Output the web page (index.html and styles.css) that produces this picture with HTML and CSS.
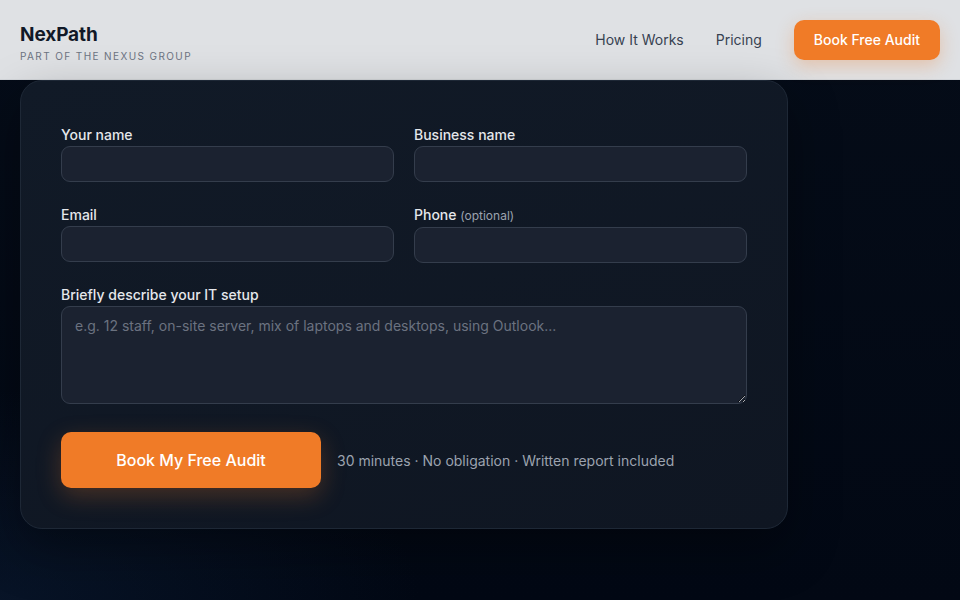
FILE: index.html
```html
<!DOCTYPE html>
<html lang="en">
<head>
<meta charset="utf-8">
<title>NexPath — Book Free Audit</title>
<link rel="stylesheet" href="styles.css">
</head>
<body>
<header class="site-header">
  <div class="brand">
    <div class="brand-name">NexPath</div>
    <div class="brand-sub">Part of the Nexus Group</div>
  </div>
  <nav class="nav">
    <a class="nav-link" href="#">How It Works</a>
    <a class="nav-link" href="#">Pricing</a>
    <a class="nav-cta" href="#">Book Free Audit</a>
  </nav>
</header>
<main class="main">
  <form class="card">
    <div class="grid">
      <div class="field">
        <label class="label">Your name</label>
        <input class="input" type="text">
      </div>
      <div class="field">
        <label class="label">Business name</label>
        <input class="input" type="text">
      </div>
      <div class="field">
        <label class="label">Email</label>
        <input class="input" type="email">
      </div>
      <div class="field">
        <label class="label">Phone <span class="opt">(optional)</span></label>
        <input class="input" type="tel">
      </div>
      <div class="field full">
        <label class="label">Briefly describe your IT setup</label>
        <textarea class="textarea" placeholder="e.g. 12 staff, on-site server, mix of laptops and desktops, using Outlook..."></textarea>
      </div>
    </div>
    <div class="actions">
      <button class="submit" type="button">Book My Free Audit</button>
      <span class="note">30 minutes · No obligation · Written report included</span>
    </div>
  </form>
</main>
</body>
</html>
```
FILE: styles.css
```css
* { box-sizing: border-box; }
html, body { margin: 0; height: 100%; }
body {
  font-family: Inter, "Noto Sans", "Liberation Sans", sans-serif;
  background:
    radial-gradient(ellipse 600px 300px at 0% 100%, rgba(14, 34, 62, 0.45), rgba(14, 34, 62, 0) 70%),
    linear-gradient(180deg, #050c18 0%, #020814 100%);
  color: #e5e7eb;
  overflow: hidden;
}
.site-header {
  height: 80px;
  background: #dfe1e4;
  display: flex;
  align-items: center;
  justify-content: space-between;
  padding: 0 20px;
  border-bottom: 1px solid #d2d5d9;
}
.brand { display: flex; flex-direction: column; }
.brand-name {
  font-size: 19px;
  font-weight: 700;
  color: #111827;
  letter-spacing: -0.1px;
  line-height: 24px;
  margin-top: 7px;
}
.brand-sub {
  font-size: 10px;
  letter-spacing: 1.4px;
  text-transform: uppercase;
  color: #6b7280;
  line-height: 14px;
  margin-top: 2px;
}
.nav { display: flex; align-items: center; gap: 32px; }
.nav-link {
  color: #374151;
  text-decoration: none;
  font-size: 14px;
  line-height: 20px;
}
.nav-cta {
  background: #f07b27;
  color: #fff;
  text-decoration: none;
  font-size: 14px;
  font-weight: 500;
  line-height: 20px;
  padding: 10px 20px;
  border-radius: 10px;
  box-shadow: 0 6px 18px rgba(240, 123, 39, 0.3);
}
.main { padding: 0 20px; }
.card {
  width: 768px;
  background: linear-gradient(160deg, #111a27 0%, #0f1622 100%);
  border: 1px solid #1e2836;
  border-radius: 22px;
  padding: 44px 40px 40px;
  box-shadow: 0 20px 50px rgba(0, 0, 0, 0.35);
}
.grid {
  display: grid;
  grid-template-columns: 1fr 1fr;
  column-gap: 20px;
  row-gap: 22.5px;
}
.field { display: flex; flex-direction: column; }
.full { grid-column: 1 / -1; }
.label {
  font-size: 14px;
  font-weight: 500;
  line-height: 20px;
  color: #e5e7eb;
  margin-bottom: 1px;
}
.opt { font-size: 12px; font-weight: 400; color: #9ca3af; }
.input, .textarea {
  background: #1b2230;
  border: 1px solid #343d4c;
  border-radius: 9px;
  color: #e5e7eb;
  font-family: inherit;
  font-size: 14px;
  outline: none;
}
.input { height: 36px; padding: 0 13px; }
.textarea {
  height: 98px;
  padding: 9px 13px;
  line-height: 20px;
  resize: vertical;
}
.textarea::placeholder { color: #6b7280; }
.actions {
  display: flex;
  align-items: center;
  gap: 16px;
  margin-top: 28px;
}
.submit {
  width: 260px;
  height: 56px;
  background: #f07b27;
  color: #fff;
  border: none;
  border-radius: 10px;
  font-family: inherit;
  font-size: 16px;
  font-weight: 500;
  box-shadow: 0 8px 24px rgba(240, 123, 39, 0.25);
}
.note { font-size: 14px; color: #9ca3af; }
```
